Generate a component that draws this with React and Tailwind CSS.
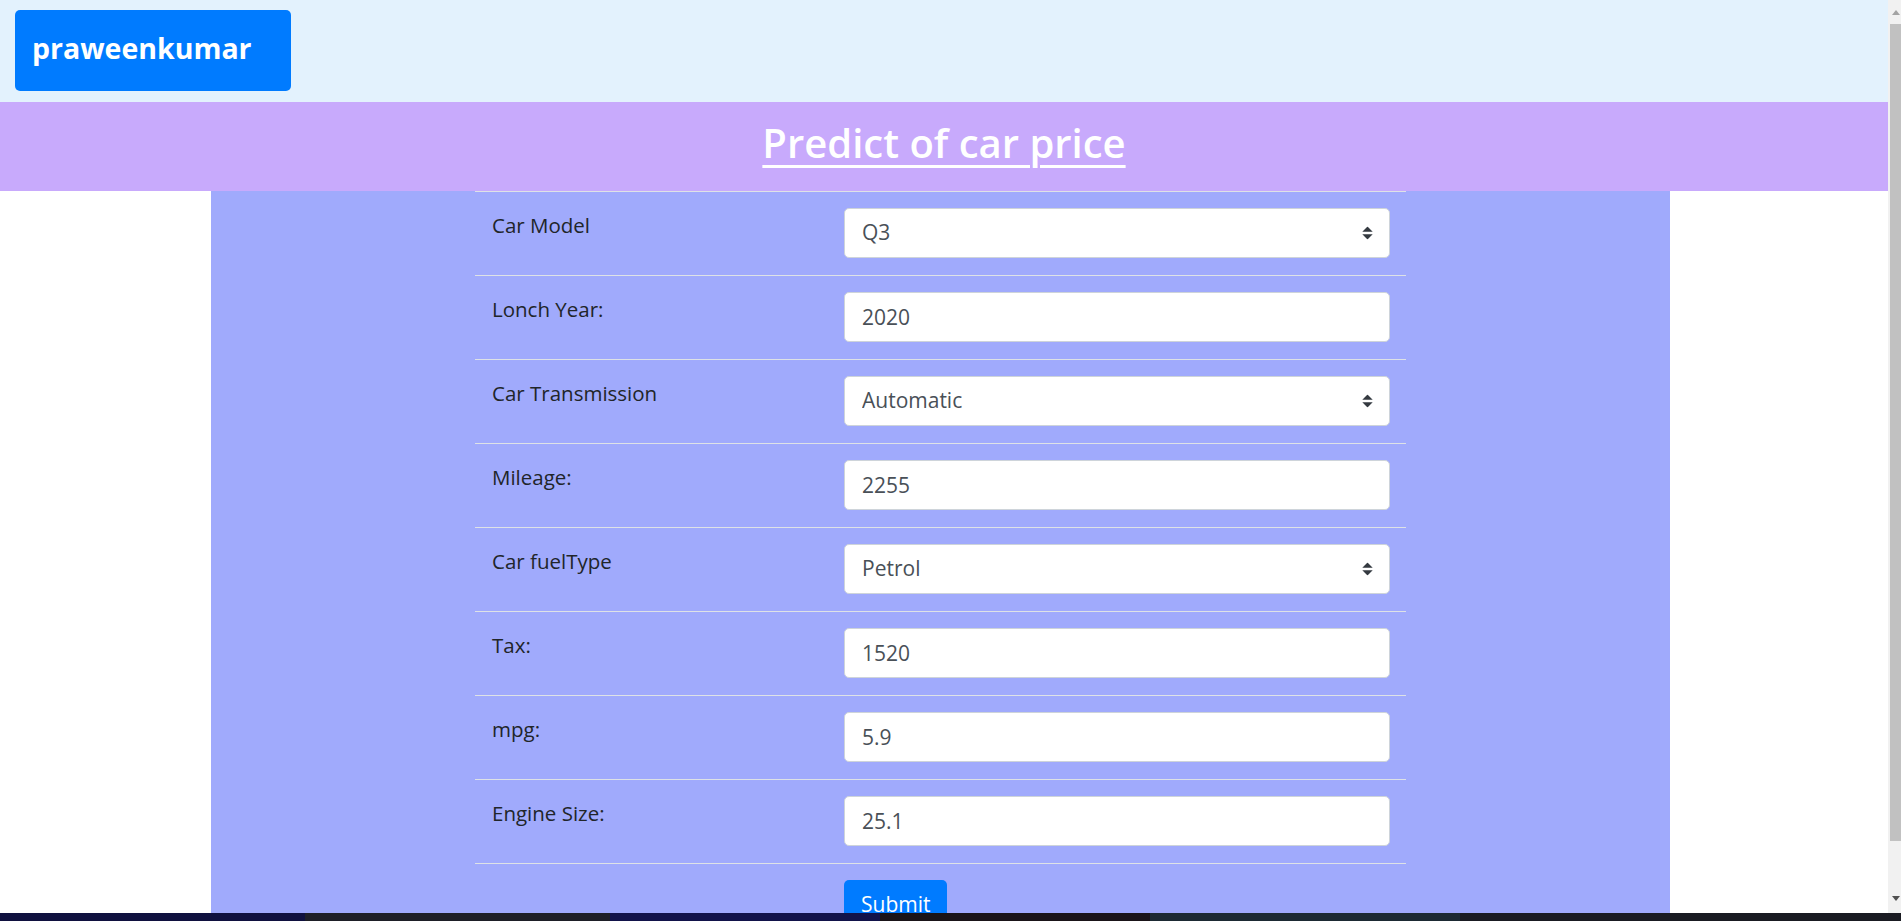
import React from 'react';

const fields = [
  { label: 'Car Model', value: 'Q3', select: true, options: ['A1', 'A3', 'Q3', 'Q5'] },
  { label: 'Lonch Year:', value: '2020' },
  { label: 'Car Transmission', value: 'Automatic', select: true, options: ['Manual', 'Automatic', 'Semi-Auto'] },
  { label: 'Mileage:', value: '2255' },
  { label: 'Car fuelType', value: 'Petrol', select: true, options: ['Petrol', 'Diesel', 'Hybrid'] },
  { label: 'Tax:', value: '1520' },
  { label: 'mpg:', value: '5.9' },
  { label: 'Engine Size:', value: '25.1' },
];

function SelectArrows() {
  return (
    <svg className="pointer-events-none absolute right-[17px] top-1/2 -translate-y-1/2" width="11" height="13" viewBox="0 0 4 5">
      <path d="M2 0L0 2h4zm0 5L0 3h4z" fill="#343a40" />
    </svg>
  );
}

function FieldRow({ field }) {
  const boxClass =
    'h-[50px] w-full rounded-[5px] border border-[#ced4da] bg-white pl-[17px] pr-[40px] text-[21px] text-[#495057] outline-none appearance-none';

  return (
    <div className="flex border-t border-[#dee2e6]">
      <div className="w-[353px] shrink-0 px-[17px] pt-[17px] text-[20.5px] leading-[32px] text-[#212529]">
        {field.label}
      </div>
      <div className="flex-1 px-[16px] pt-[16px] pb-[17px]">
        {field.select ? (
          <div className="relative">
            <select defaultValue={field.value} className={boxClass}>
              {field.options.map((o) => (
                <option key={o} value={o}>{o}</option>
              ))}
            </select>
            <SelectArrows />
          </div>
        ) : (
          <input type="text" defaultValue={field.value} className={boxClass} />
        )}
      </div>
    </div>
  );
}

export default function App() {
  return (
    <div className="flex h-[921px] w-full flex-col overflow-hidden bg-white" style={{ fontFamily: '"Open Sans", "Noto Sans", sans-serif' }}>
      <div className="flex min-h-0 flex-1">
        {/* Page */}
        <div className="min-w-0 flex-1 overflow-hidden">
          {/* Navbar */}
          <div className="h-[102px] bg-[#e3f2fd] pl-[15px] pt-[10px]">
            <div className="flex h-[81px] w-[276px] items-center rounded-[5px] bg-[#007bff] pl-[17px] pb-[5px] text-[28.5px] font-bold text-white">
              praweenkumar
            </div>
          </div>

          {/* Title band */}
          <div className="flex h-[89px] items-center justify-center bg-[#c8aafc] pb-[7px]">
            <h2 className="text-[40px] font-semibold leading-none text-white underline decoration-[3px] underline-offset-[7px]">
              Predict of car price
            </h2>
          </div>

          {/* Form panel */}
          <div className="ml-[211px] w-[1459px] bg-[#a0aafc] pb-[40px]">
            <form className="mx-auto w-[931px]" onSubmit={(e) => e.preventDefault()}>
              {fields.map((f) => (
                <FieldRow key={f.label} field={f} />
              ))}
              <div className="flex border-t border-[#dee2e6]">
                <div className="w-[353px] shrink-0" />
                <div className="px-[16px] py-[16px]">
                  <button type="submit" className="h-[50px] rounded-[5px] bg-[#007bff] px-[17px] text-[21px] text-white">
                    Submit
                  </button>
                </div>
              </div>
            </form>
          </div>
        </div>

        {/* Scrollbar */}
        <div className="flex w-[13px] shrink-0 flex-col bg-[#f1f1f1]">
          <div className="flex h-[24px] items-center justify-end pr-[1px]">
            <svg width="8" height="5" viewBox="0 0 8 5"><path d="M4 0L8 5H0z" fill="#a3a3a3" /></svg>
          </div>
          <div className="ml-[2px] h-[817px] bg-[#c1c1c1]" />
          <div className="flex flex-1 items-end justify-end pb-[12px] pr-[1px]">
            <svg width="8" height="5" viewBox="0 0 8 5"><path d="M0 0H8L4 5z" fill="#505050" /></svg>
          </div>
        </div>
      </div>

      {/* Desktop strip */}
      <div className="h-[8px] shrink-0 bg-[linear-gradient(90deg,#10113f_0px,#10113f_305px,#1e1f27_305px,#1e1f27_610px,#12134a_610px,#12134a_880px,#1a1418_880px,#1a1418_1150px,#1d2a33_1150px,#1d2a33_1460px,#1a1b22_1460px)]" />
    </div>
  );
}
